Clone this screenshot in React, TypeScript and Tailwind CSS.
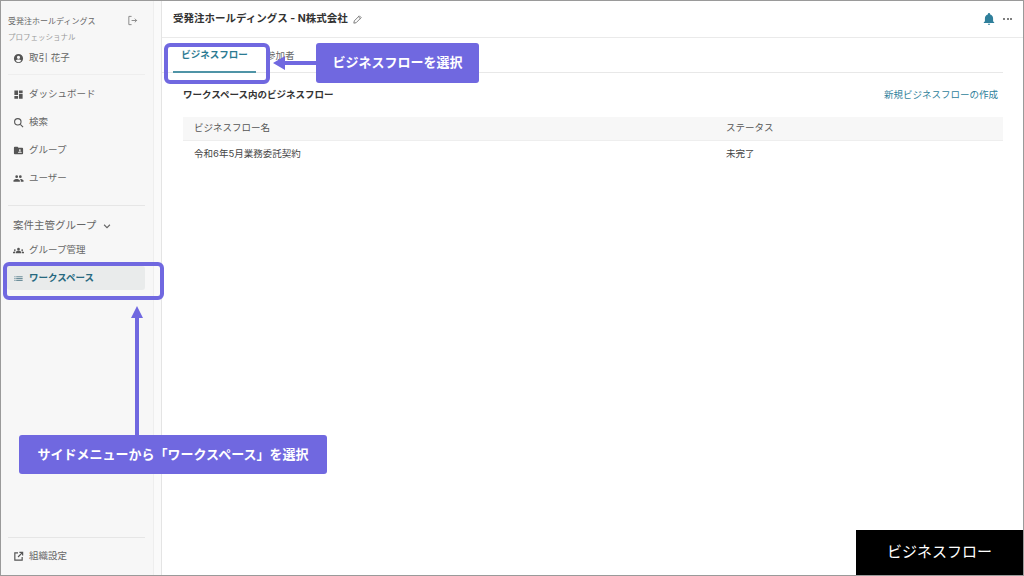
import React from "react";

const font = { fontFamily: '"Inter","Noto Sans CJK JP",sans-serif' };

function Icon({ children, className = "w-[11px] h-[11px] text-[#555]" }: { children: React.ReactNode; className?: string }) {
  return (
    <svg viewBox="0 0 24 24" fill="currentColor" className={className + " shrink-0"}>
      {children}
    </svg>
  );
}

function NavItem({ icon, label }: { icon: React.ReactNode; label: string }) {
  return (
    <div className="flex items-center h-[28px] pl-[12px] gap-[5px] text-[9.5px] text-[#666]">
      {icon}
      <span>{label}</span>
    </div>
  );
}

export default function App() {
  return (
    <div
      className="relative w-[1024px] h-[576px] overflow-hidden bg-white border-t border-l border-r border-b border-[#9a9a9a] flex text-[#333]"
      style={font}
    >
      <aside className="w-[153px] shrink-0 bg-[#f7f7f7] border-r border-[#eeeeee] flex flex-col pl-[6px] pr-[8px]">
        <div className="flex items-center justify-between h-[13px] mt-[13px] pl-[1px] pr-[7px] text-[8px] text-[#666]">
          <span>受発注ホールディングス</span>
          <svg viewBox="0 0 24 24" fill="none" stroke="#777" strokeWidth="1.8" className="w-[11px] h-[11px]">
            <path d="M10 3H4v18h6M10 12h11M17 8l4 4-4 4" />
          </svg>
        </div>
        <div className="mt-[4px] pl-[1px] text-[7.5px] h-[13px] leading-[13px] text-[#999]">プロフェッショナル</div>
        <div className="flex items-center h-[20px] mt-[4px] pl-[6px] gap-[5px] text-[9.5px] text-[#666]">
          <Icon>
            <path d="M12 2a10 10 0 1 0 0 20 10 10 0 0 0 0-20zm0 4a3.5 3.5 0 1 1 0 7 3.5 3.5 0 0 1 0-7zm0 14a8 8 0 0 1-6.2-3c.9-1.9 3.9-3 6.2-3s5.3 1.1 6.2 3a8 8 0 0 1-6.2 3z" />
          </Icon>
          <span>取引 花子</span>
        </div>
        <div className="h-px bg-[#eeeeee] mt-[6px] mb-[5px] ml-[1px]" />
        <div className="-ml-[0px] pl-[0px]">
          <div className="-ml-[6px]">
            <NavItem
              icon={
                <Icon>
                  <path d="M3 13h8V3H3v10zm0 8h8v-6H3v6zm10 0h8V11h-8v10zm0-18v6h8V3h-8z" />
                </Icon>
              }
              label="ダッシュボード"
            />
            <NavItem
              icon={
                <svg viewBox="0 0 24 24" fill="none" stroke="#555" strokeWidth="2.4" className="w-[11px] h-[11px] shrink-0">
                  <circle cx="10.5" cy="10.5" r="7" />
                  <path d="M16 16l6 6" />
                </svg>
              }
              label="検索"
            />
            <NavItem
              icon={
                <Icon>
                  <path d="M20 6h-8l-2-2H4a2 2 0 0 0-2 2v12a2 2 0 0 0 2 2h16a2 2 0 0 0 2-2V8a2 2 0 0 0-2-2zm-5 3a2 2 0 1 1 0 4 2 2 0 0 1 0-4zm4 8h-8v-1c0-1.3 2.7-2 4-2s4 .7 4 2v1z" />
                </Icon>
              }
              label="グループ"
            />
            <NavItem
              icon={
                <Icon>
                  <path d="M16 11a3 3 0 1 0 0-6 3 3 0 0 0 0 6zm-8 0a3 3 0 1 0 0-6 3 3 0 0 0 0 6zm0 2c-2.3 0-7 1.2-7 3.5V19h14v-2.5C15 14.2 10.300 13 8 13zm8 0h-1c1.200.9 2 2 2 3.500V19h6v-2.500c0-2.300-4.700-3.500-7-3.500z" />
                </Icon>
              }
              label="ユーザー"
            />
          </div>
        </div>
        <div className="h-px bg-[#e6e6e6] mt-[13px] ml-[1px]" />
        <div className="flex items-center h-[14px] mt-[13px] pl-[6px] gap-[6px] text-[10.5px] text-[#666]">
          <span>案件主管グループ</span>
          <svg viewBox="0 0 24 24" fill="none" stroke="#666" strokeWidth="2.6" className="w-[10px] h-[10px]">
            <path d="M5 9l7 7 7-7" />
          </svg>
        </div>
        <div className="-ml-[6px] mt-[3px]">
          <NavItem
            icon={
              <Icon>
                <path d="M12 12.700c1.600 0 3.100.4 4.300.9.900.4 1.700 1.200 1.700 2.400v2H6v-2c0-1.200.6-2 1.700-2.400 1.200-.5 2.700-.9 4.300-.9zM4 13a2 2 0 1 0 0-4 2 2 0 0 0 0 4zm1.100 1.100A7 7 0 0 0 4 14c-1 0-1.900.2-2.800.6A2 2 0 0 0 0 16.400V18h4.500v-1.600c0-.9.200-1.600.6-2.300zM20 13a2 2 0 1 0 0-4 2 2 0 0 0 0 4zm4 3.400a2 2 0 0 0-1.200-1.800A7 7 0 0 0 20 14c-.4 0-.700 0-1.100.1.400.7.600 1.400.6 2.300V18H24v-1.600zM12 6a3 3 0 1 1 0 6 3 3 0 0 1 0-6z" />
              </Icon>
            }
            label="グループ管理"
          />
        </div>
        <div className="flex items-center h-[24px] mt-[2px] pl-[6px] gap-[5px] rounded-[3px] bg-[#e9ebeb] text-[9.5px] font-bold text-[#27697f]">
          <svg viewBox="0 0 24 24" fill="#6d8f9b" className="w-[11px] h-[11px] shrink-0">
            <path d="M3 7h2.500v2.400H3zM3 11h2.500v2.400H3zM3 15h2.500v2.400H3zM7 7h14v2.400H7zM7 11h14v2.400H7zM7 15h14v2.400H7z" />
          </svg>
          <span>ワークスペース</span>
        </div>
        <div className="flex-1" />
        <div className="h-px bg-[#e6e6e6] ml-[1px]" />
        <div className="flex items-center h-[37px] pl-[6px] gap-[5px] text-[9.5px] text-[#666]">
          <svg viewBox="0 0 24 24" fill="none" stroke="#555" strokeWidth="2.600" className="w-[11px] h-[11px] shrink-0">
            <path d="M11 4H4v16h16v-7M14 3h7v7M21 3l-10 10" />
          </svg>
          <span>組織設定</span>
        </div>
      </aside>
      <div className="w-[8px] shrink-0 bg-[#fafafa] border-r border-[#e4e4e4]" />
      <main className="flex-1 flex flex-col min-w-0">
        <header className="h-[37px] shrink-0 border-b border-[#eaeaea] flex items-center pl-[11px] pr-[11px]">
          <span className="text-[10.5px] font-bold text-[#333]">受発注ホールディングス - N株式会社</span>
          <svg viewBox="0 0 24 24" fill="none" stroke="#666" strokeWidth="1.800" className="w-[11px] h-[11px] ml-[4px]">
            <path d="M4 20l1-5L16 4l4 4L9 19l-5 1zM14 6l4 4" />
          </svg>
          <div className="flex-1" />
          <svg viewBox="0 0 24 24" fill="#2f7f9b" className="w-[14px] h-[14px]">
            <path d="M12 22a2 2 0 0 0 2-2h-4a2 2 0 0 0 2 2zm7-6v-5c0-3.300-1.800-6-5-6.700V3.500a2 2 0 0 0-4 0v.8C6.800 5 5 7.700 5 11v5l-2 2v1h18v-1l-2-2z" />
          </svg>
          <div className="flex gap-[1.500px] ml-[7px]">
            <span className="w-[2px] h-[2px] rounded-full bg-[#555]" />
            <span className="w-[2px] h-[2px] rounded-full bg-[#555]" />
            <span className="w-[2px] h-[2px] rounded-full bg-[#555]" />
          </div>
        </header>
        <div className="flex-1 pl-[0px] pr-[20px]">
          <div className="flex h-[35px] border-b border-[#e8e8e8] ml-[0px] pl-[11px]">
            <div className="w-[83px] h-[35px] flex items-center justify-center text-[9.5px] font-bold text-[#2b7a92] border-b-2 border-[#4f94a6] pt-[2px] -mb-[0px]">
              ビジネスフロー
            </div>
            <div className="ml-[10px] h-[35px] flex items-center text-[9.5px] text-[#666] pt-[2px]">参加者</div>
          </div>
          <div className="flex items-center justify-between h-[14px] mt-[15px] pl-[21px] pr-[5px]">
            <span className="text-[9.5px] font-bold text-[#333]">ワークスペース内のビジネスフロー</span>
            <span className="text-[9.5px] text-[#2f7f9b]">新規ビジネスフローの作成</span>
          </div>
          <div className="ml-[21px] mr-[0px] mt-[15px] w-[820px]">
            <div className="flex items-center h-[24px] bg-[#f7f7f7] border-b border-[#eeeeee] text-[9.5px] text-[#555]">
              <span className="w-[543px] pl-[11px]">ビジネスフロー名</span>
              <span>ステータス</span>
            </div>
            <div className="flex items-center h-[27px] text-[9.5px] text-[#444]">
              <span className="w-[543px] pl-[11px]">令和6年5月業務委託契約</span>
              <span>未完了</span>
            </div>
          </div>
        </div>
      </main>

      {/* annotations */}
      <div className="absolute left-[163px] top-[42px] w-[106px] h-[41px] rounded-[6px] border-[4px] border-[#7068e0]" />
      <div className="absolute left-[2px] top-[261px] w-[161px] h-[38px] rounded-[6px] border-[4px] border-[#7068e0]" />
      <div className="absolute left-[315px] top-[42px] w-[163px] h-[40px] rounded-[3px] bg-[#7068e0] flex items-center justify-center text-[13px] font-bold text-white">
        ビジネスフローを選択
      </div>
      <div className="absolute left-[18px] top-[434px] w-[308px] h-[39px] rounded-[3px] bg-[#7068e0] flex items-center justify-center text-[13px] font-bold text-white">
        サイドメニューから「ワークスペース」を選択
      </div>
      <svg className="absolute left-[272px] top-[54px]" width="44" height="16" viewBox="0 0 44 16">
        <path d="M0 8l12-7v5h32v4H12v5z" fill="#7068e0" />
      </svg>
      <svg className="absolute left-[129px] top-[305px]" width="14" height="130" viewBox="0 0 14 130">
        <path d="M7 0l6 12H9v118H5V12H1z" fill="#7068e0" />
      </svg>
      <div className="absolute right-0 bottom-0 w-[167px] h-[45px] bg-black flex items-center justify-center text-[15px] text-white">
        ビジネスフロー
      </div>
    </div>
  );
}
